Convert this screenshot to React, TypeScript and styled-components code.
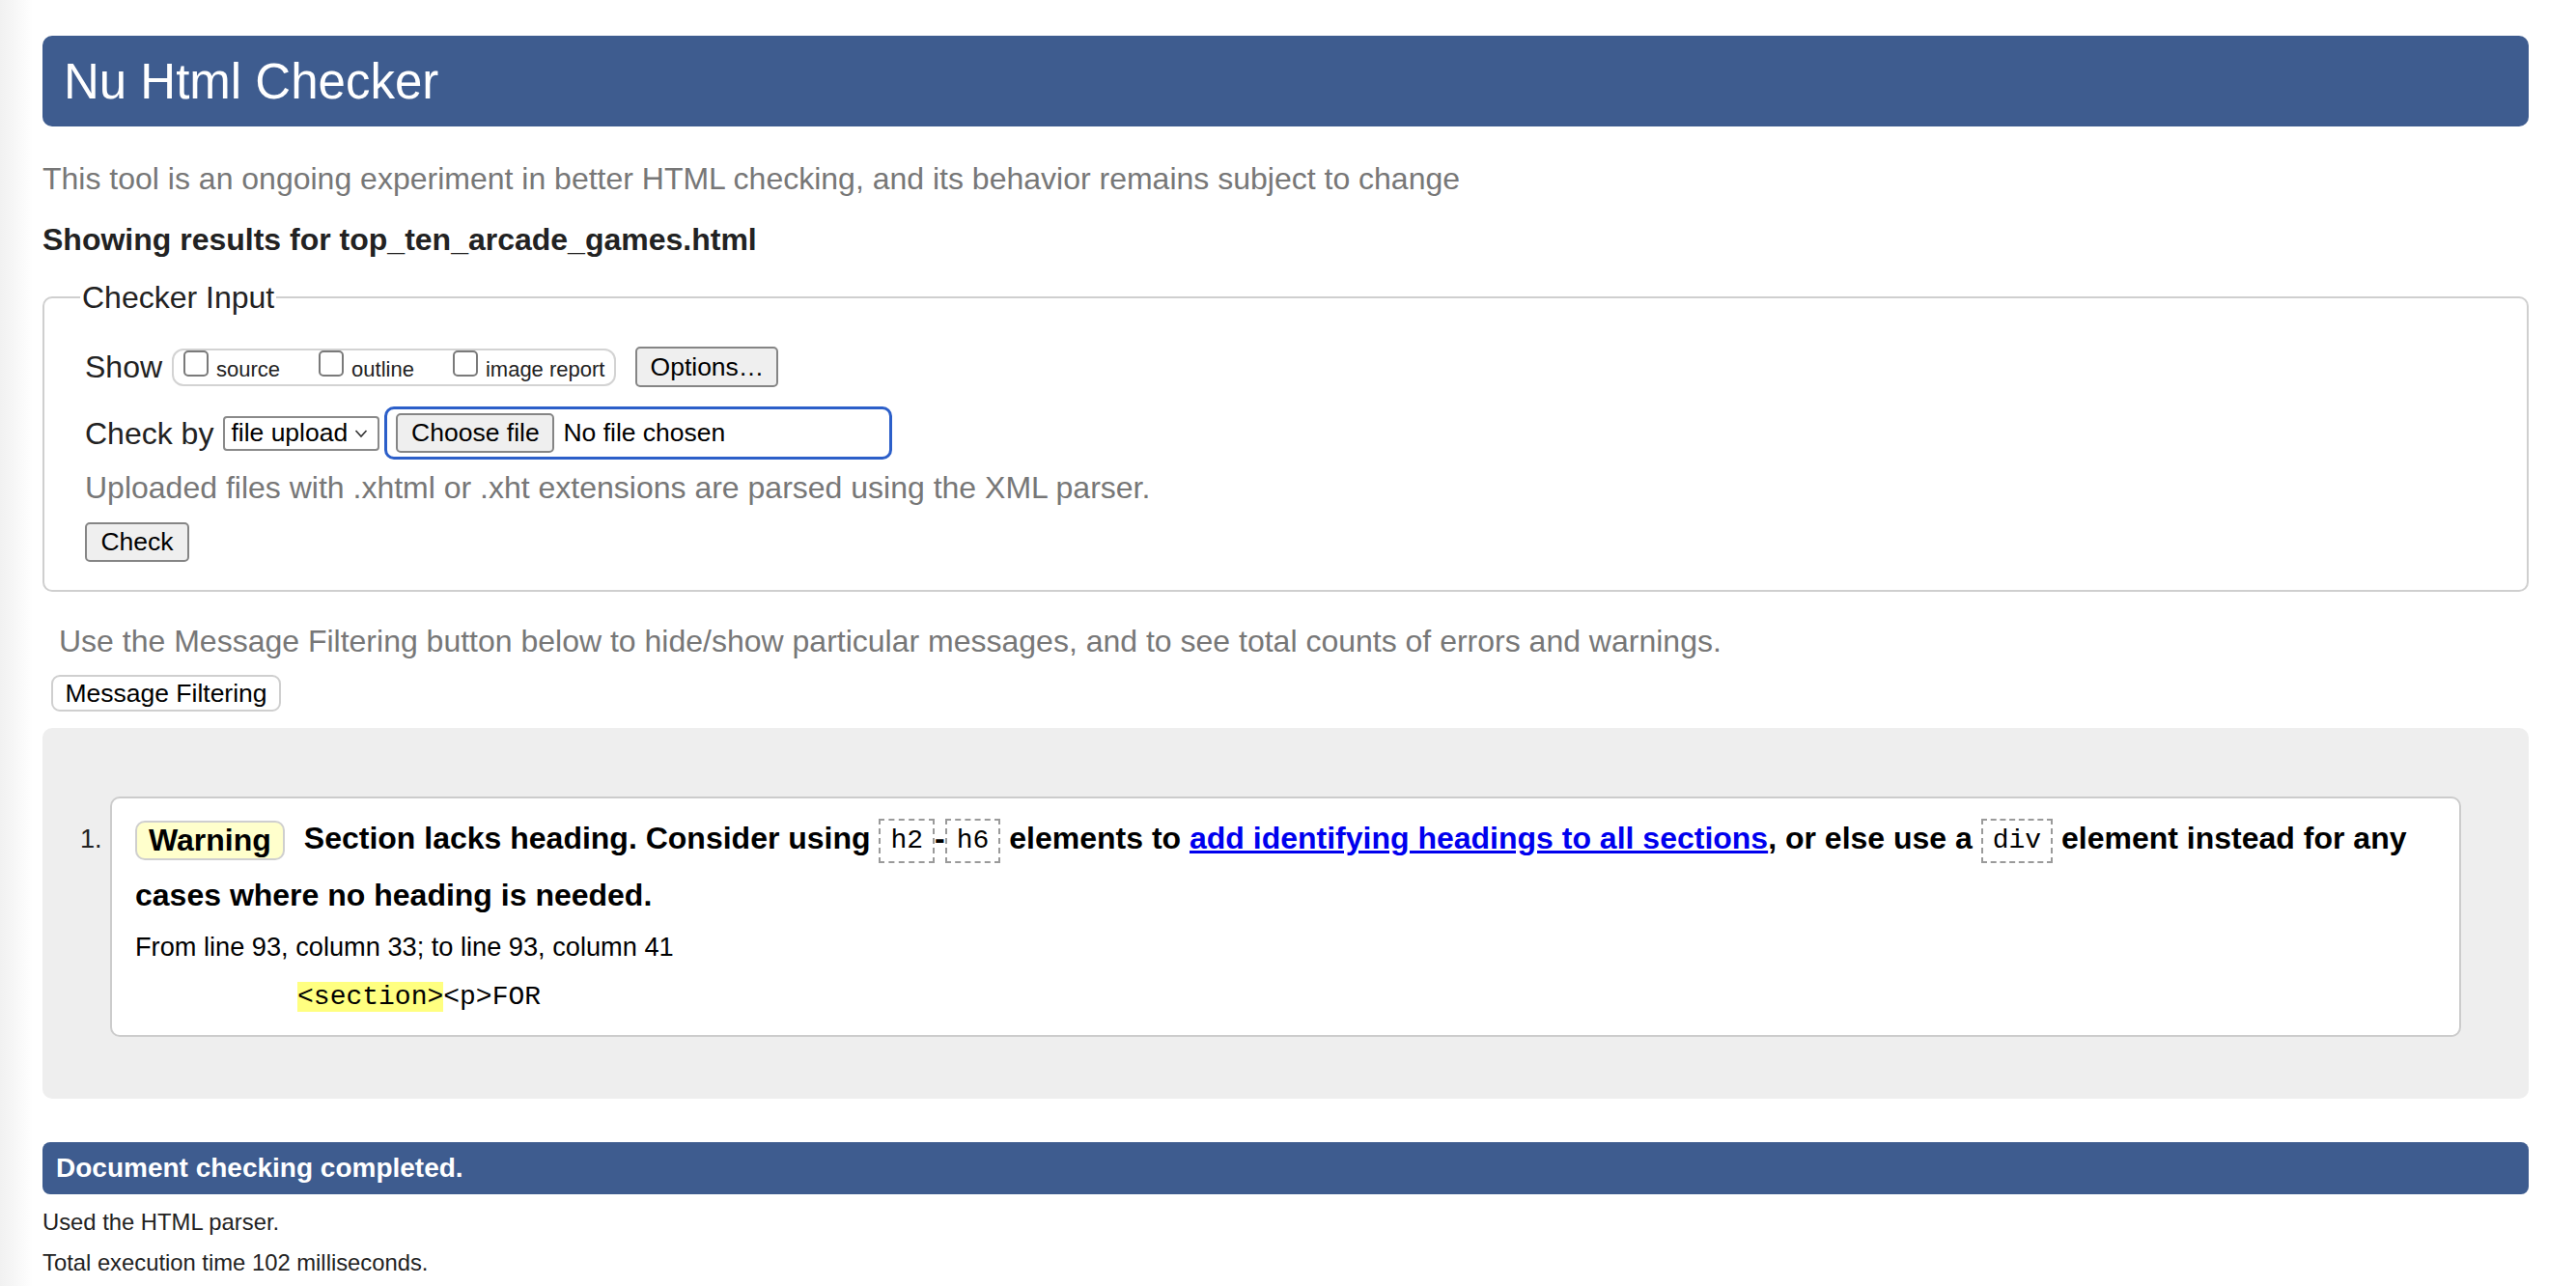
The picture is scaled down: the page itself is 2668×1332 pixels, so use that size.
import React from 'react';
import styled, { createGlobalStyle } from 'styled-components';

const GlobalStyle = createGlobalStyle`
  html, body {
    margin: 0;
    padding: 0;
  }
  body {
    background: linear-gradient(90deg, #f1f1f1 0, #f7f7f7 16px, #fff 34px);
    font-family: 'Liberation Sans', Arial, Helvetica, sans-serif;
    color: #222;
  }
`;

const Page = styled.div`
  padding: 37px 49px 10px 44px;
`;

const Banner = styled.h1`
  margin: 0;
  height: 94px;
  display: flex;
  align-items: center;
  padding-left: 22px;
  background: #3e5c8f;
  border-radius: 10px;
  color: #fff;
  font-size: 51px;
  font-weight: normal;
`;

const Muted = styled.p<{ $indent?: number; $top: number }>`
  margin: ${(p) => p.$top}px 0 0 ${(p) => p.$indent || 0}px;
  font-size: 32px;
  line-height: 38px;
  color: #777;
`;

const ResultsTitle = styled.h2`
  margin: 25px 0 0;
  font-size: 32px;
  line-height: 38px;
  font-weight: bold;
  color: #222;
`;

const Fieldset = styled.fieldset`
  margin: 22px 0 0;
  padding: 32px 42px 29px;
  border: 2px solid #cfcfcf;
  border-radius: 10px;
  min-width: 0;
`;

const Legend = styled.legend`
  font-size: 32px;
  line-height: 38px;
  padding: 0 2px;
  margin-left: -5px;
  color: #222;
`;

const FormRow = styled.div<{ $top?: number }>`
  display: flex;
  align-items: center;
  margin-top: ${(p) => p.$top || 0}px;
`;

const RowLabel = styled.span`
  font-size: 32px;
  line-height: 38px;
  margin-right: 10px;
  color: #222;
`;

const OptionGroup = styled.div`
  display: flex;
  align-items: baseline;
  height: 35px;
  padding: 0 10px 0 10px;
  border: 2px solid #d3d3d3;
  border-radius: 12px;
  margin-right: 20px;
`;

const OptionLabel = styled.label`
  display: inline-flex;
  align-items: baseline;
  font-size: 22px;
  line-height: 30px;
  color: #222;

  & + & {
    margin-left: 40px;
  }
`;

const Box = styled.span`
  display: inline-block;
  width: 22px;
  height: 23px;
  border: 2px solid #7a7a7a;
  border-radius: 5px;
  background: #fff;
  margin-right: 8px;
`;

const GrayButton = styled.button<{ $w: number; $h: number }>`
  width: ${(p) => p.$w}px;
  height: ${(p) => p.$h}px;
  padding: 0;
  background: #efefef;
  border: 2px solid #858585;
  border-radius: 5px;
  font-family: inherit;
  font-size: 26.5px;
  color: #000;
`;

const SelectBox = styled.div`
  display: flex;
  align-items: center;
  justify-content: space-between;
  width: 162px;
  height: 36px;
  box-sizing: border-box;
  padding: 0 10px 0 6px;
  border: 2px solid #8a8a8a;
  border-radius: 4px;
  background: #fff;
  font-size: 26.5px;
  color: #000;
  margin-right: 5px;
`;

const FileField = styled.div`
  display: flex;
  align-items: center;
  width: 526px;
  height: 55px;
  box-sizing: border-box;
  padding-left: 9px;
  border: 3px solid #2c5fc9;
  border-radius: 10px;
`;

const FileName = styled.span`
  margin-left: 9px;
  font-size: 26.5px;
  color: #000;
`;

const MessageFilterButton = styled.button`
  display: block;
  margin: 16px 0 0 9px;
  width: 238px;
  height: 38px;
  padding: 0;
  background: #fff;
  border: 2px solid #cfcfcf;
  border-radius: 9px;
  font-family: inherit;
  font-size: 26.5px;
  color: #000;
`;

const ResultsPanel = styled.div`
  margin-top: 17px;
  padding: 71px 70px 64px 39px;
  background: #eeeeee;
  border-radius: 10px;
`;

const MessageList = styled.ol`
  list-style: none;
  margin: 0;
  padding: 0;
`;

const MessageItem = styled.li`
  display: grid;
  grid-template-columns: 31px 1fr;
`;

const ItemNumber = styled.span`
  padding-top: 14px;
  font-size: 27.2px;
  line-height: 59px;
  color: #222;
`;

const MessageCard = styled.div`
  background: #fff;
  border: 2px solid #cccccc;
  border-radius: 10px;
  padding: 12px 24px 19px;
`;

const MessageText = styled.p`
  margin: 0;
  font-size: 32px;
  line-height: 59px;
  font-weight: bold;
  color: #000;
`;

const Badge = styled.strong`
  display: inline-block;
  vertical-align: middle;
  margin-right: 20px;
  padding: 0 12px;
  line-height: 37px;
  background: #ffffcc;
  border: 2px solid #cfcfcf;
  border-radius: 10px;
`;

const InlineCode = styled.code`
  display: inline-block;
  vertical-align: middle;
  padding: 5px 10px;
  line-height: 32px;
  border: 2px dashed #9a9a9a;
  font-family: 'Liberation Mono', 'Courier New', monospace;
  font-size: 28px;
  font-weight: normal;
`;

const DocLink = styled.a`
  color: #0000ee;
  text-decoration: underline;
`;

const Location = styled.p`
  margin: 4px 0 0;
  font-size: 27.2px;
  line-height: 40px;
  color: #000;
`;

const Extract = styled.pre`
  margin: 12px 0 0;
  font-family: 'Liberation Mono', 'Courier New', monospace;
  font-size: 28px;
  line-height: 40px;
  color: #000;
`;

const Highlight = styled.b`
  font-weight: normal;
  background: #ffff80;
`;

const DoneBar = styled.h2`
  margin: 45px 0 0;
  height: 54px;
  display: flex;
  align-items: center;
  padding-left: 14px;
  background: #3e5c8f;
  border-radius: 8px;
  color: #fff;
  font-size: 28px;
  font-weight: bold;
`;

const Stat = styled.p<{ $top: number }>`
  margin: ${(p) => p.$top}px 0 0;
  font-size: 23.8px;
  line-height: 28px;
  color: #222;
`;

const Chevron = () => (
  <svg width="14" height="10" viewBox="0 0 14 10" fill="none">
    <path d="M1.5 2l5.5 6 5.5-6" stroke="#333" strokeWidth="1.6" />
  </svg>
);

const App: React.FC = () => {
  const options = ['source', 'outline', 'image report'];

  return (
    <Page>
      <GlobalStyle />
      <Banner>Nu Html Checker</Banner>
      <Muted $top={35}>
        This tool is an ongoing experiment in better HTML checking, and its behavior remains subject to change
      </Muted>
      <ResultsTitle>Showing results for top_ten_arcade_games.html</ResultsTitle>

      <Fieldset>
        <Legend>Checker Input</Legend>
        <FormRow>
          <RowLabel>Show</RowLabel>
          <OptionGroup>
            {options.map((o) => (
              <OptionLabel key={o}>
                <Box />
                {o}
              </OptionLabel>
            ))}
          </OptionGroup>
          <GrayButton $w={148} $h={42}>Options…</GrayButton>
        </FormRow>
        <FormRow $top={20}>
          <RowLabel>Check by</RowLabel>
          <SelectBox>
            file upload
            <Chevron />
          </SelectBox>
          <FileField>
            <GrayButton $w={164} $h={41}>Choose file</GrayButton>
            <FileName>No file chosen</FileName>
          </FileField>
        </FormRow>
        <Muted $top={10}>Uploaded files with .xhtml or .xht extensions are parsed using the XML parser.</Muted>
        <FormRow $top={17}>
          <GrayButton $w={108} $h={41}>Check</GrayButton>
        </FormRow>
      </Fieldset>

      <Muted $top={32} $indent={17}>
        Use the Message Filtering button below to hide/show particular messages, and to see total counts of errors and warnings.
      </Muted>
      <MessageFilterButton>Message Filtering</MessageFilterButton>

      <ResultsPanel>
        <MessageList>
          <MessageItem>
            <ItemNumber>1.</ItemNumber>
            <MessageCard>
              <MessageText>
                <Badge>Warning</Badge>
                Section lacks heading. Consider using <InlineCode>h2</InlineCode>-<InlineCode>h6</InlineCode> elements
                to <DocLink href="#">add identifying headings to all sections</DocLink>, or else use a{' '}
                <InlineCode>div</InlineCode> element instead for any cases where no heading is needed.
              </MessageText>
              <Location>From line 93, column 33; to line 93, column 41</Location>
              <Extract>
                {'          '}
                <Highlight>{'<section>'}</Highlight>
                {'<p>FOR'}
              </Extract>
            </MessageCard>
          </MessageItem>
        </MessageList>
      </ResultsPanel>

      <DoneBar>Document checking completed.</DoneBar>
      <Stat $top={15}>Used the HTML parser.</Stat>
      <Stat $top={14}>Total execution time 102 milliseconds.</Stat>
    </Page>
  );
};

export default App;
